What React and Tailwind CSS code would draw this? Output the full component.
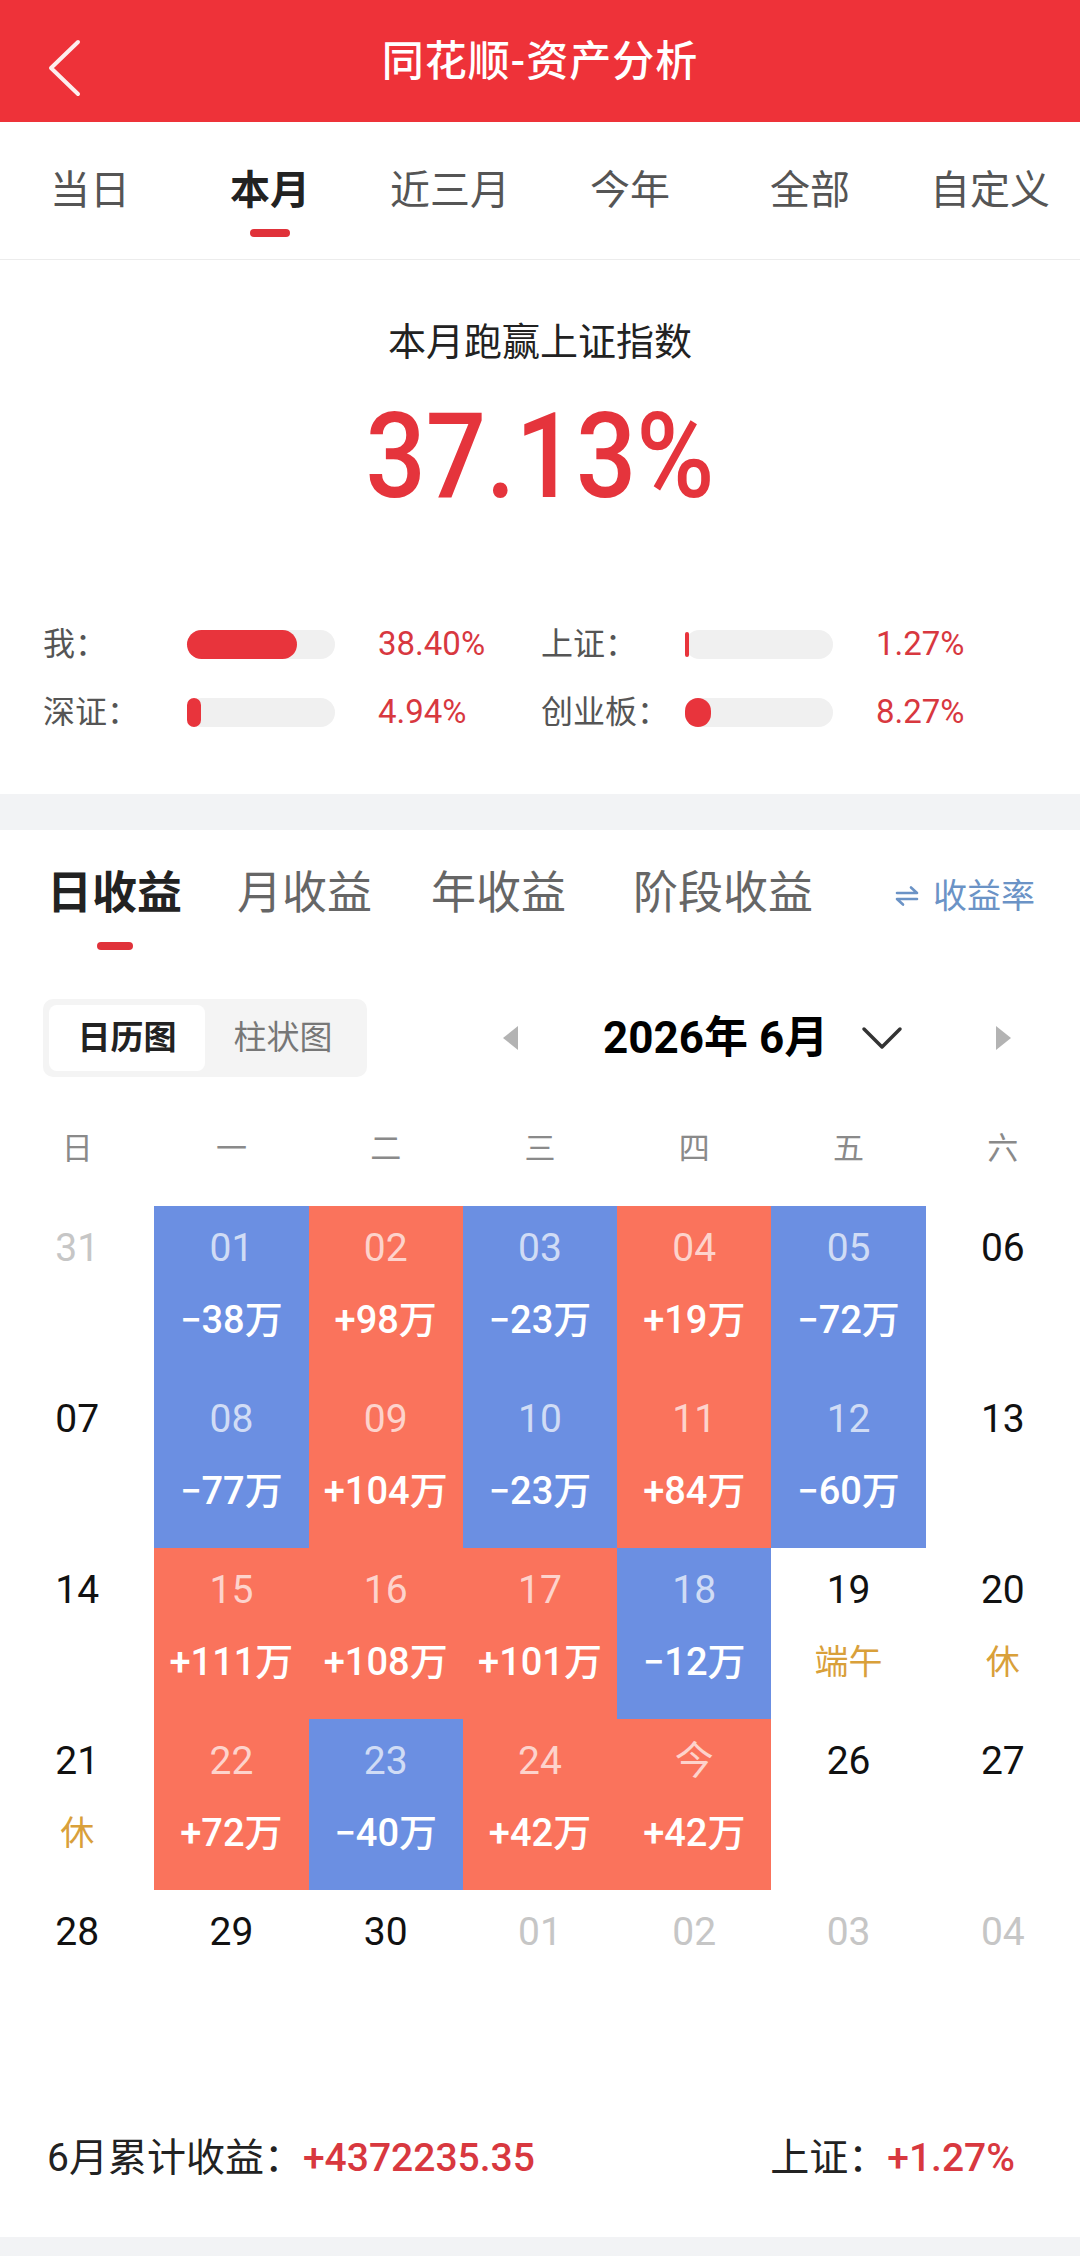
import React from "react";

const B = "bg-[#6b8fe2]";
const R = "bg-[#fa735c]";

const weeks = [
  [
    { d: "31", t: "out" },
    { d: "01", c: B, v: "−38万" },
    { d: "02", c: R, v: "+98万" },
    { d: "03", c: B, v: "−23万" },
    { d: "04", c: R, v: "+19万" },
    { d: "05", c: B, v: "−72万" },
    { d: "06" },
  ],
  [
    { d: "07" },
    { d: "08", c: B, v: "−77万" },
    { d: "09", c: R, v: "+104万" },
    { d: "10", c: B, v: "−23万" },
    { d: "11", c: R, v: "+84万" },
    { d: "12", c: B, v: "−60万" },
    { d: "13" },
  ],
  [
    { d: "14" },
    { d: "15", c: R, v: "+111万" },
    { d: "16", c: R, v: "+108万" },
    { d: "17", c: R, v: "+101万" },
    { d: "18", c: B, v: "−12万" },
    { d: "19", h: "端午" },
    { d: "20", h: "休" },
  ],
  [
    { d: "21", h: "休" },
    { d: "22", c: R, v: "+72万" },
    { d: "23", c: B, v: "−40万" },
    { d: "24", c: R, v: "+42万" },
    { d: "今", c: R, v: "+42万" },
    { d: "26" },
    { d: "27" },
  ],
  [
    { d: "28" },
    { d: "29" },
    { d: "30" },
    { d: "01", t: "out" },
    { d: "02", t: "out" },
    { d: "03", t: "out" },
    { d: "04", t: "out" },
  ],
];

function Cell({ cell }) {
  const colored = !!cell.c;
  const numColor = colored
    ? "text-white/70"
    : cell.t === "out"
    ? "text-[#c6c6c6]"
    : "text-[#111111]";
  return (
    <div className={`h-[171px] flex flex-col items-center pt-[20px] ${cell.c || "bg-white"}`}>
      <div className={`text-[39px] leading-[44px] ${numColor}`}>{cell.d}</div>
      {cell.v && (
        <div className="mt-[28px] text-[38px] leading-[44px] font-medium text-white">{cell.v}</div>
      )}
      {cell.h && (
        <div className="mt-[28px] text-[34px] leading-[44px] text-[#d9a03a]">{cell.h}</div>
      )}
    </div>
  );
}

function Stat({ label, pct, fill }) {
  return (
    <div className="flex items-center h-[40px]">
      <div className="w-[144px] text-[32px] text-[#555555]">{label}</div>
      <div className="w-[148px] h-[29px] rounded-full bg-[#f0f0f0] flex items-center">
        <div className={`rounded-full bg-[#e8343c] ${fill}`} />
      </div>
      <div className="ml-[43px] text-[33px] text-[#d8383f]">{pct}</div>
    </div>
  );
}

export default function App() {
  const tabs = ["当日", "本月", "近三月", "今年", "全部", "自定义"];
  const weekdays = ["日", "一", "二", "三", "四", "五", "六"];
  return (
    <div className="w-[1080px] min-h-[2256px] bg-[#f2f3f5] font-['Roboto','Noto_Sans_CJK_SC',sans-serif]">
      {/* header */}
      <div className="relative h-[122px] bg-[#ee3239] flex items-center justify-center">
        <svg className="absolute left-[44px] top-[36px]" width="44" height="62" viewBox="0 0 44 62">
          <polyline points="34,6 7,32 34,58" fill="none" stroke="#fdeeee" strokeWidth="4" strokeLinecap="round" strokeLinejoin="round" />
        </svg>
        <div className="text-[42px] font-medium text-white tracking-[1px]">同花顺-资产分析</div>
      </div>

      {/* period tabs */}
      <div className="h-[138px] bg-white grid grid-cols-6 border-b border-[#ececec]">
        {tabs.map((t, i) => (
          <div key={t} className="flex flex-col items-center pt-[48px]">
            <div className={`text-[40px] leading-[42px] ${i === 1 ? "font-bold text-[#222222]" : "text-[#555555]"}`}>{t}</div>
            {i === 1 && <div className="mt-[17px] w-[40px] h-[8px] rounded-full bg-[#e0323a]" />}
          </div>
        ))}
      </div>

      {/* summary */}
      <div className="bg-white pt-[59px] pb-[59px] h-[534px]">
        <div className="text-center text-[38px] leading-[46px] text-[#222222]">本月跑赢上证指数</div>
        <div className="mt-[32px] flex justify-center">
          <div className="inline-block scale-x-[0.9] text-[118px] leading-[120px] font-medium text-[#e5343c]">37.13%</div>
        </div>
        <div className="mt-[107px] px-[43px] grid grid-cols-[498px_1fr] gap-y-[28px]">
          <Stat label="我：" pct="38.40%" fill="w-[110px] h-[29px]" />
          <Stat label="上证：" pct="1.27%" fill="w-[4px] h-[25px]" />
          <Stat label="深证：" pct="4.94%" fill="w-[14px] h-[29px]" />
          <Stat label="创业板：" pct="8.27%" fill="w-[26px] h-[29px]" />
        </div>
      </div>

      {/* profit section */}
      <div className="mt-[36px] bg-white">
        <div className="flex items-start pt-[38px] pl-[47px] pr-[45px]">
          <div className="flex flex-col items-center">
            <div className="text-[45px] leading-[52px] font-bold text-[#222222]">日收益</div>
            <div className="mt-[22px] w-[36px] h-[8px] rounded-full bg-[#e0323a]" />
          </div>
          <div className="ml-[55px] text-[45px] leading-[52px] text-[#666666]">月收益</div>
          <div className="ml-[59px] text-[45px] leading-[52px] text-[#666666]">年收益</div>
          <div className="ml-[67px] text-[45px] leading-[52px] text-[#666666]">阶段收益</div>
          <div className="ml-auto flex items-center h-[56px] text-[34px] text-[#6b93c6]">
            <svg width="24" height="26" viewBox="0 0 24 26" className="mr-[14px]">
              <path d="M2 10 H22 L16 4.5" fill="none" stroke="#6b93c6" strokeWidth="2.6" strokeLinecap="round" strokeLinejoin="round" />
              <path d="M22 16 H2 L8 21.5" fill="none" stroke="#6b93c6" strokeWidth="2.6" strokeLinecap="round" strokeLinejoin="round" />
            </svg>
            收益率
          </div>
        </div>

        {/* segmented + month nav */}
        <div className="mt-[49px] flex items-center pl-[43px]">
          <div className="flex p-[6px] rounded-[10px] bg-[#f4f4f4]">
            <div className="w-[156px] h-[66px] rounded-[8px] bg-white flex items-center justify-center text-[33px] font-bold text-[#222222]">日历图</div>
            <div className="w-[156px] h-[66px] flex items-center justify-center text-[33px] text-[#777777]">柱状图</div>
          </div>
          <svg className="ml-[135px]" width="17" height="26" viewBox="0 0 17 26">
            <polygon points="16,1 16,25 1,13" fill="#b3b3b3" />
          </svg>
          <div className="ml-[84px] text-[44px] font-bold text-black leading-[50px]">2026年 6月</div>
          <svg className="ml-[33px]" width="42" height="26" viewBox="0 0 42 26">
            <polyline points="3,4 21,22 39,4" fill="none" stroke="#333333" strokeWidth="3.5" strokeLinecap="round" strokeLinejoin="round" />
          </svg>
          <svg className="ml-[92px]" width="17" height="26" viewBox="0 0 17 26">
            <polygon points="1,1 1,25 16,13" fill="#b3b3b3" />
          </svg>
        </div>

        {/* weekday header */}
        <div className="mt-[42px] grid grid-cols-7 h-[60px] items-center">
          {weekdays.map((w) => (
            <div key={w} className="text-center text-[31px] text-[#8a8a8a]">{w}</div>
          ))}
        </div>

        {/* calendar */}
        <div className="mt-[27px] grid grid-cols-7">
          {weeks.flat().map((c, i) => (
            <Cell key={i} cell={c} />
          ))}
        </div>

        {/* footer */}
        <div className="mt-[73px] pb-[55px] flex items-center justify-between pl-[47px] pr-[65px] h-[48px] box-content">
          <div className="text-[39px] text-[#222222]">
            6月累计收益：<span className="font-medium text-[#d8383f]">+4372235.35</span>
          </div>
          <div className="text-[39px] text-[#222222]">
            上证：<span className="font-medium text-[#d8383f]">+1.27%</span>
          </div>
        </div>
      </div>
      <div className="h-[20px] bg-[#f2f3f5]" />
    </div>
  );
}
